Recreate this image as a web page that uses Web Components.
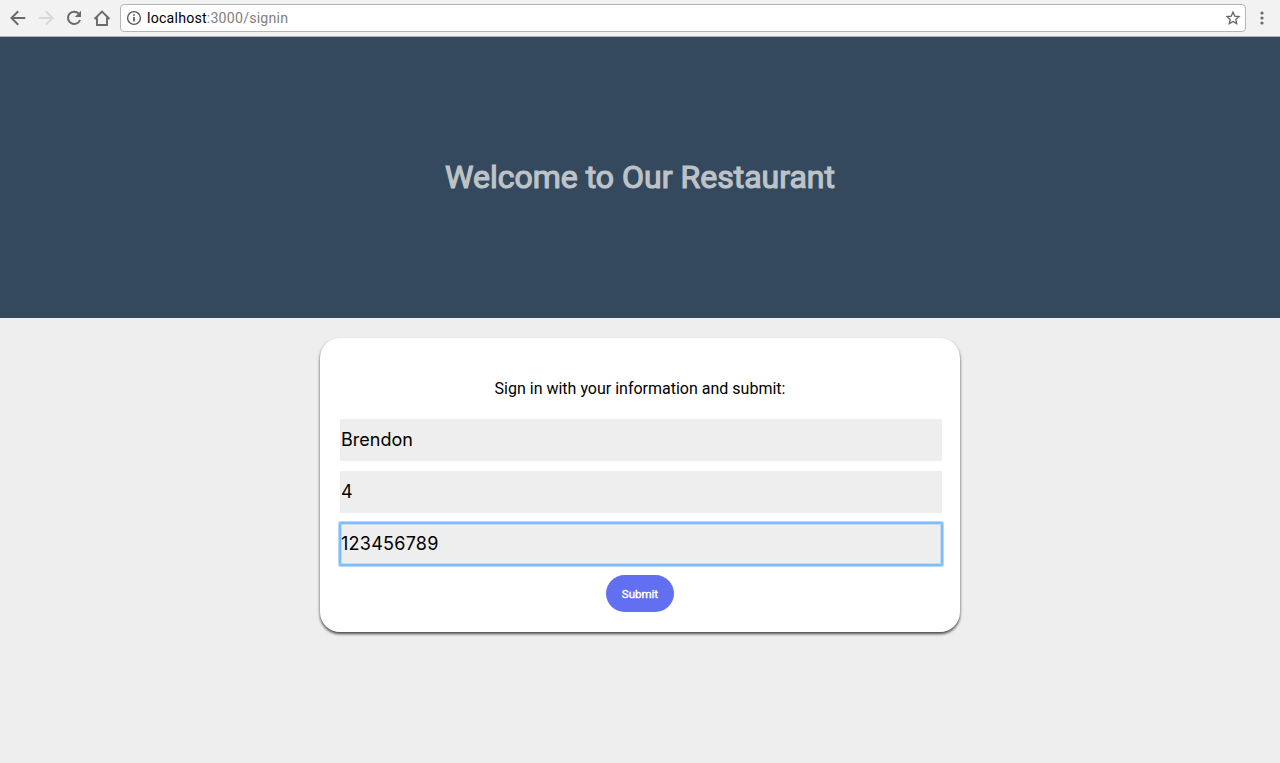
<!DOCTYPE html>
<html lang="en">
<head>
<meta charset="utf-8">
<title>Sign in</title>
<style>
html, body { margin: 0; height: 100%; background: #eee; overflow: hidden; }
</style>
</head>
<body>
<restaurant-window></restaurant-window>
<script>
const define = (name, html) => customElements.define(name, class extends HTMLElement {
  constructor() {
    super();
    const t = document.createElement('template');
    t.innerHTML = html;
    this.attachShadow({ mode: 'open' }).append(t.content.cloneNode(true));
  }
});

define('browser-bar', `<style>
:host { display: flex; align-items: center; box-sizing: border-box; height: 37px; padding: 0 9px; background: #f2f2f2; border-bottom: 1px solid #b6b4b6; }
svg { display: block; flex: none; }
.nav { display: flex; gap: 10px; width: 111px; flex: none; }
.address { display: flex; align-items: center; flex: 1; height: 28px; box-sizing: border-box; border: 1px solid #b5b5b5; border-radius: 4px; background: #fff; padding: 0 4px; }
.url { flex: 1; margin-left: 4px; color: #808080; font: 14.2px/20px Roboto, sans-serif; letter-spacing: .2px; }
.url b { font-weight: 400; color: #000; }
.menu { margin-left: 7px; }
</style>
<div class="nav">
<svg width="18" height="18" fill="none" stroke="#6a6a6a" stroke-width="2"><path d="M16.3 9H3M9.2 2.3 2.5 9l6.7 6.7"/></svg>
<svg width="18" height="18" fill="none" stroke="#d8d8d8" stroke-width="2"><path d="M1.7 9H15M8.8 2.3 15.5 9l-6.7 6.7"/></svg>
<svg width="18" height="18" fill="none" stroke="#6a6a6a" stroke-width="2"><path d="M13.8 4.7A6.2 6.2 0 1 0 15 11"/><path d="M16 1.8V8H9.8Z" fill="#6a6a6a" stroke="none"/></svg>
<svg width="18" height="18" fill="none" stroke="#6a6a6a" stroke-width="1.9"><path d="M1.5 10 9 2.5l7.5 7.5M4 8.5V16h10V8.5"/></svg>
</div>
<div class="address">
<svg width="18" height="18" fill="none" stroke="#5a5a5a"><circle cx="9" cy="9" r="6.4" stroke-width="1.4"/><path d="M9 8v4.6M9 5.2v1.6" stroke-width="1.7"/></svg>
<span class="url"><b>localhost</b>:3000/signin</span>
<svg width="16" height="16" viewBox="0 0 16 16" fill="none" stroke="#666" stroke-width="1.3"><path d="m8 2.1 1.7 4 4.3.4-3.2 2.9.9 4.2L8 11.4l-3.7 2.2.9-4.2L2 6.5l4.3-.4Z"/></svg>
</div>
<svg class="menu" width="18" height="18" fill="#6a6a6a"><circle cx="9" cy="4" r="1.6"/><circle cx="9" cy="9" r="1.6"/><circle cx="9" cy="14" r="1.6"/></svg>`);

define('welcome-banner', `<style>
:host { display: flex; align-items: center; justify-content: center; box-sizing: border-box; height: 281px; padding-bottom: 2px; background: #34495e; }
h1 { margin: 0; font: 400 32px/40px Roboto, sans-serif; color: #bdc3c7; -webkit-text-stroke: 1.2px #bdc3c7; white-space: nowrap; }
</style><h1><slot></slot></h1>`);

define('form-field', `<style>
:host { display: flex; align-items: center; box-sizing: border-box; width: 602px; height: 42px; padding-left: 1px; background: #eee; color: #000; font: 18px/22px Inter, sans-serif; }
:host([focused]) { border-radius: 1px; letter-spacing: .25px; box-shadow: 0 0 0 1px #7ebbfa, 0 0 0 2px #b5d9fd, inset 0 0 0 1px #7ebbfa, inset 0 0 0 2px #c8dcf0; }
</style><span><slot></slot></span>`);

define('submit-button', `<style>
:host { display: block; }
button { display: block; width: 68px; height: 37px; border: 0; padding: 1px 0 0; border-radius: 18.5px; background: #626ff0; color: #fff; font: 400 11.5px/15px Roboto, sans-serif; -webkit-text-stroke: .4px #fff; }
</style><button type="button"><slot></slot></button>`);

define('signin-card', `<style>
:host { display: flex; flex-direction: column; align-items: center; box-sizing: border-box; width: 640px; height: 294px; margin: 20px auto 0; padding: 41px 20px 20px; border-radius: 20px; background: #fff; box-shadow: 0 2px 3px rgba(0,0,0,.7); }
p { margin: 0 0 20px; font: 16px/20px Roboto, sans-serif; color: #000; }
.fields { display: grid; gap: 10px; align-self: flex-start; margin-bottom: 10px; }
</style>
<p>Sign in with your information and submit:</p>
<div class="fields"><form-field>Brendon</form-field><form-field>4</form-field><form-field focused>123456789</form-field></div>
<submit-button>Submit</submit-button>`);

define('restaurant-window', `<style>
:host { display: block; height: 763px; background: #eee; }
</style>
<browser-bar></browser-bar>
<welcome-banner>Welcome to Our Restaurant</welcome-banner>
<signin-card></signin-card>`);
</script>
</body>
</html>
